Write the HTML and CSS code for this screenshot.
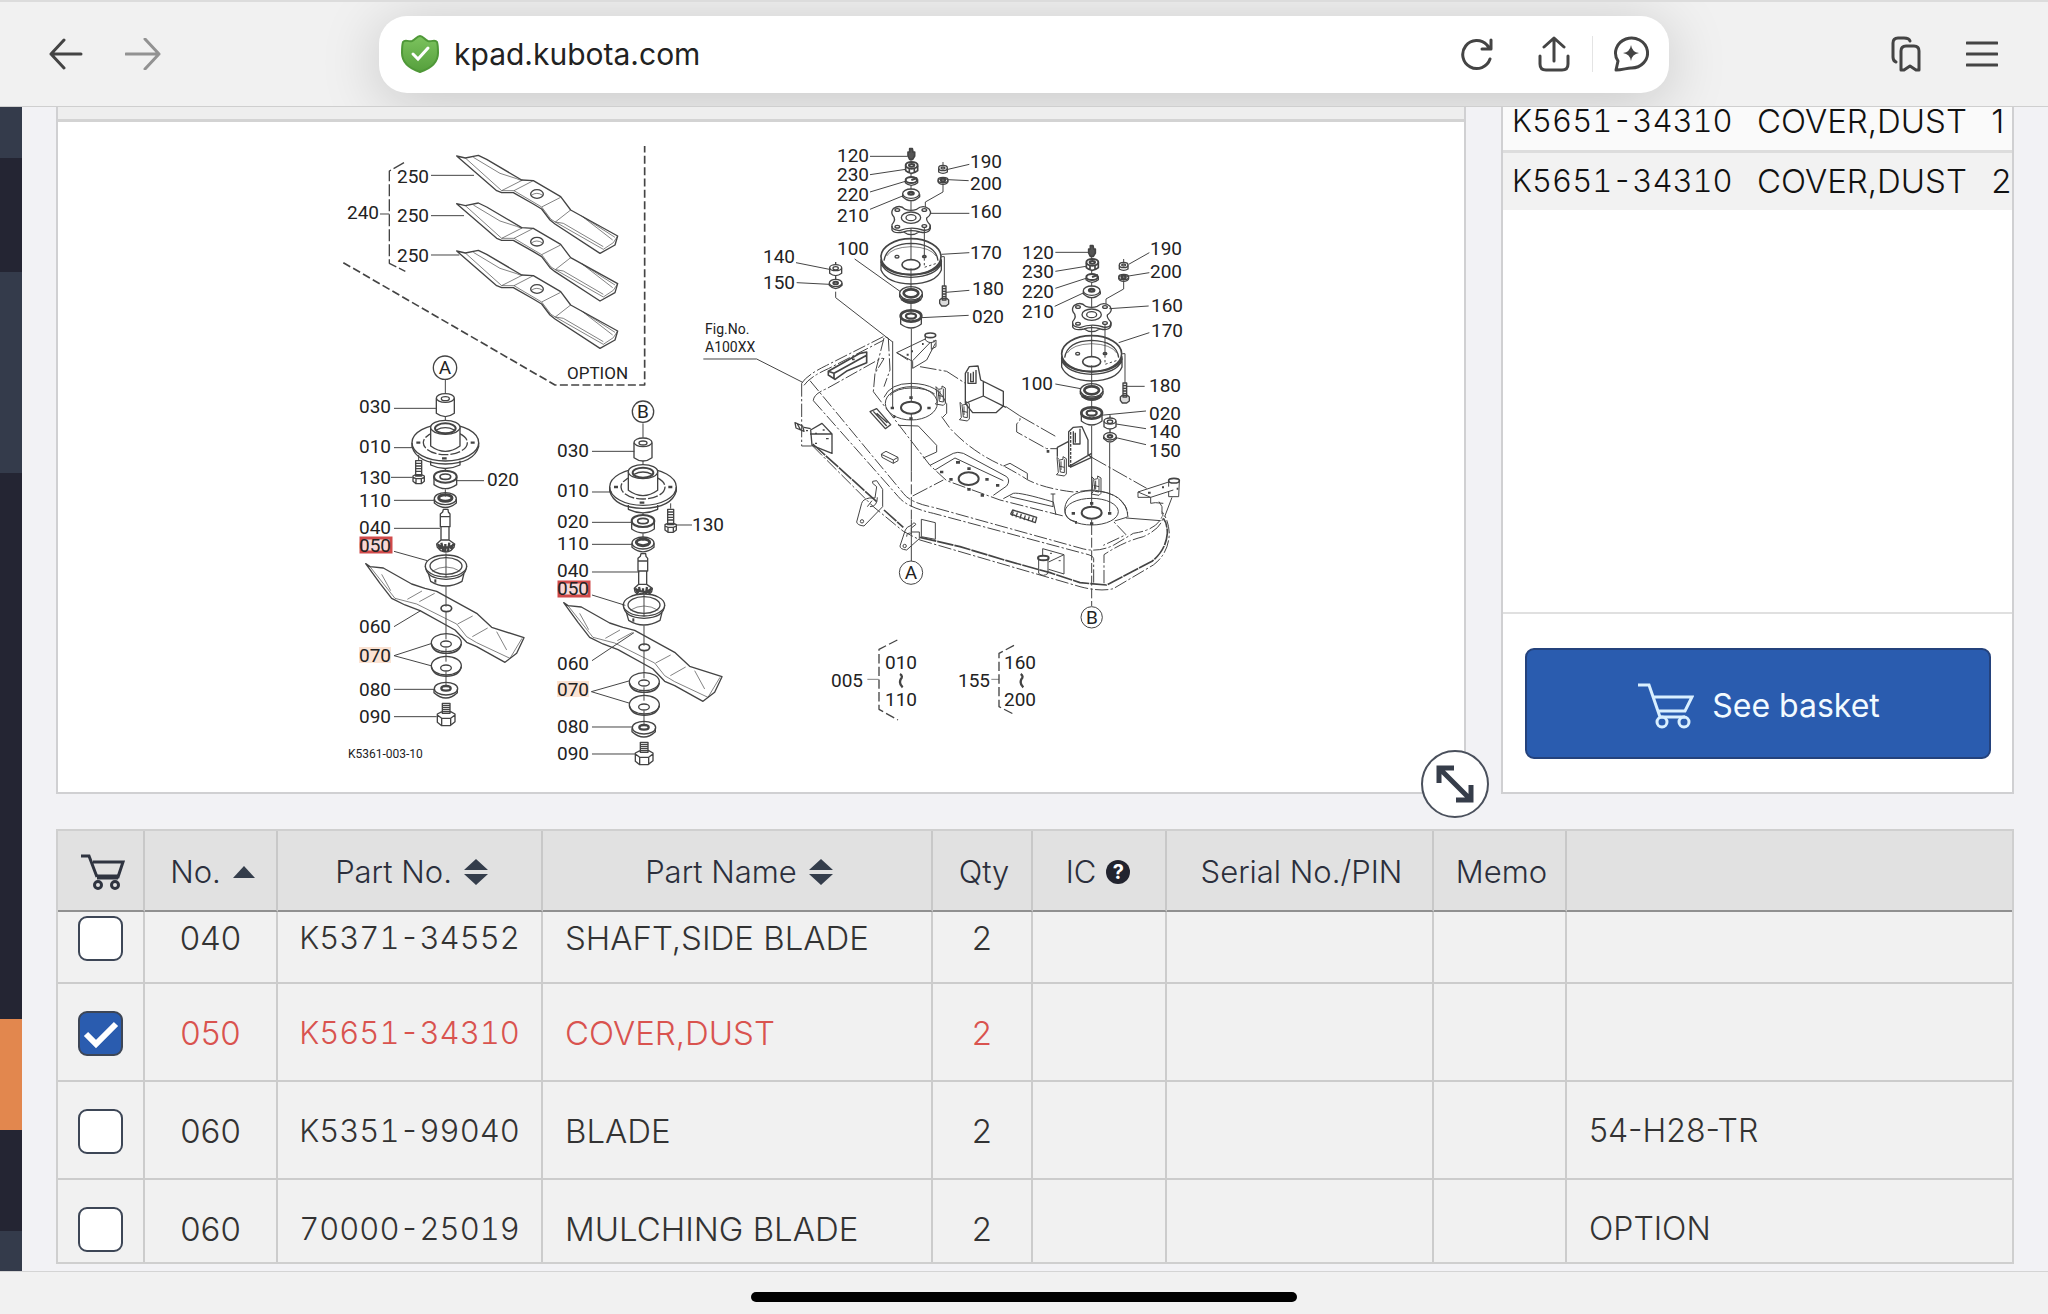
FILE: index.html
```html
<!DOCTYPE html>
<html lang="en">
<head>
<meta charset="utf-8">
<title>kpad.kubota.com</title>
<link rel="stylesheet" href="styles.css">
</head>
<body>
<header class="browser-bar">
  <div class="bar-nav">
    <button class="icon-button" aria-label="Back"><svg width="34" height="32" viewBox="0 0 34 32"><path d="M32 16H2M15 2 2 16 15 30"/></svg></button>
    <button class="icon-button is-dim" aria-label="Forward"><svg width="36" height="32" viewBox="0 0 36 32"><path d="M1 16H34M20 1 34 16 20 31"/></svg></button>
  </div>
  <div class="address">
    <svg class="shield" width="38" height="38" viewBox="0 0 38 38"><defs><linearGradient id="leaf" x1="0" y1="0" x2="0" y2="1"><stop offset="0" stop-color="#7cc35e"/><stop offset="1" stop-color="#559f3c"/></linearGradient></defs><path d="M19 1C22 1 24 5 27 6C31 7 34 4 36 7C37 10 37 14 37 18C37 28 28 34 19 37C10 34 1 28 1 18C1 14 1 10 2 7C4 4 7 7 11 6C14 5 16 1 19 1Z" fill="url(#leaf)" stroke="#4f9838" stroke-width="2"/><path d="M12 19 17 24 27 13" fill="none" stroke="#fff" stroke-width="3" stroke-linecap="round"/></svg>
    <span class="address-text">kpad.kubota.com</span>
    <button class="icon-button" aria-label="Reload"><svg width="32" height="34" viewBox="0 0 32 34"><path d="M29 22A14 14 0 1 1 26 8L29 12M30 3V12H21"/></svg></button>
    <button class="icon-button share" aria-label="Share"><svg width="32" height="36" viewBox="0 0 32 36"><path d="M16 25V2M6 11 16 2 26 11M2 20V28Q2 34 8 34H24Q30 34 30 28V20"/></svg></button>
    <span class="divider"></span>
    <button class="icon-button" aria-label="Assistant"><svg width="36" height="36" viewBox="0 0 36 36"><path d="M3 34 5 25A16 15 0 1 1 18 32C14 32 9 34 3 34Z"/><path d="M18 9Q19 16 26 17Q19 18 18 25Q17 18 10 17Q17 16 18 9Z" fill="#444"/></svg></button>
  </div>
  <div class="bar-tools">
    <button class="icon-button" aria-label="Tabs and bookmarks"><svg width="30" height="36" viewBox="0 0 30 36"><path d="M5 26Q2 25 2 21V7Q2 2 7 2H13Q18 2 19 5"/><path d="M10 34V15Q10 10 15 10H23Q28 10 28 15V34H25L19 30 13 34Z"/></svg></button>
    <button class="icon-button" aria-label="Menu"><svg width="32" height="28" viewBox="0 0 32 28"><path d="M1 3H31M1 14H31M1 25H31"/></svg></button>
  </div>
</header>

<div class="app">
  <nav class="rail" aria-label="Sections">
    <span class="rail-a"></span><span class="rail-b"></span><span class="rail-c"></span><span class="rail-d"></span><span class="rail-current"></span><span class="rail-e"></span><span class="rail-f"></span>
  </nav>
  <main class="content">
    <div class="upper">
      <section class="drawing-panel" aria-label="Parts diagram">
        <div class="drawing-head"></div>
        <svg class="drawing" viewBox="58 122 1406 670">
          <defs>
            <g id="option-blade">
              <path d="M410 78 436 84 475 76 500 88 605 150 640 152 722 200 752 240 893 318 885 345 840 370 705 282 690 270 665 237 640 222 580 188 545 188 530 182Z"/>
              <path d="M436 84 545 182 608 150M545 182 582 182 640 152M460 82 540 130 590 146 605 152M582 182 665 231 693 268 706 276 850 358 880 338 893 318M665 231 722 202M706 276 752 240M785 258 878 330M785 258 885 322M706 276 730 280 850 350" stroke-width="2"/>
              <ellipse cx="651" cy="192" rx="19" ry="13"/><path d="M634 196Q650 184 668 196" stroke-width="2"/>
            </g>
            <g id="spindle-top">
              <path d="M376 117V160M376 230V250M376 385V395M376 448V470" stroke-width="3"/>
              <path d="M349 175V220Q376 240 403 220V175"/><ellipse cx="376" cy="174" rx="27" ry="13"/><ellipse cx="376" cy="176" rx="12" ry="6"/>
              <path d="M332 362V375Q376 396 420 375V362"/>
              <path d="M276 308V320Q290 370 376 372Q462 370 476 320V308"/>
              <ellipse cx="376" cy="308" rx="100" ry="55"/><ellipse cx="376" cy="308" rx="66" ry="36" stroke-dasharray="30 6"/>
              <path d="M332 262V318Q376 350 420 318V262" fill="#fff"/><ellipse cx="376" cy="262" rx="44" ry="21" fill="#fff"/><ellipse cx="376" cy="265" rx="31" ry="15" stroke-width="6"/><path d="M349 270Q376 256 403 270"/>
              <path d="M289 308h12M452 308h12M366 355h14" stroke-width="7"/>
              <path d="M342 410V434Q376 458 410 434V410"/><ellipse cx="376" cy="410" rx="34" ry="18" stroke-width="6"/><ellipse cx="376" cy="410" rx="16" ry="8" stroke-width="5"/>
              <path d="M343 477V489Q376 516 409 489V477"/><ellipse cx="376" cy="476" rx="33" ry="18"/><ellipse cx="376" cy="474" rx="20" ry="10" stroke-width="9"/>
              <path d="M370 508H384L385 516 390 522V560H387V600H363V560H361V522L368 516ZM361 530H390M361 560H390M363 600 350 612 352 622 362 632Q378 640 392 632L402 622 404 612 387 600" fill="#fff"/>
              <path d="M354 614 362 628M364 608 370 634M376 612V636M388 608 384 634M400 612 393 628M352 613Q378 632 403 613" stroke-width="7"/>
            </g>
            <g id="spindle-bottom">
              <path d="M137 671 150 680 190 684 275 732 315 745 350 754 470 820 515 862 612 893 590 940 555 967 470 920 440 907 405 870 300 812 255 795 215 775 180 730Z"/>
              <path d="M150 680 225 775 290 792 410 852 440 890 470 908 570 955 606 895M185 703 212 752M262 778 306 753M298 785 344 760M413 852 458 828M457 890 503 864M530 875 560 930" stroke-width="2"/>
              <path d="M325 700 332 724Q376 752 426 724L432 700" fill="#fff"/><path d="M316 678Q318 716 378 718Q438 716 440 678"/><ellipse cx="378" cy="678" rx="62" ry="33" fill="#fff"/><ellipse cx="378" cy="678" rx="48" ry="25"/><path d="M346 718v10" stroke-width="6"/><path d="M336 694Q378 668 421 694" stroke-width="2"/>
              <path d="M378 640V712M378 740V800M378 815V898M378 925V965M378 995V1035" stroke-width="3"/>
              <ellipse cx="379" cy="805" rx="16" ry="10" stroke-width="5"/>
              <path d="M334 912Q340 940 379 940Q418 940 424 912M334 980Q340 1009 379 1009Q418 1009 424 980"/>
              <ellipse cx="379" cy="908" rx="45" ry="27"/><ellipse cx="378" cy="912" rx="16" ry="9"/>
              <ellipse cx="379" cy="977" rx="45" ry="28"/><ellipse cx="378" cy="984" rx="16" ry="9"/>
              <path d="M342 1048V1058Q378 1090 412 1058V1048"/><ellipse cx="378" cy="1046" rx="35" ry="19"/><ellipse cx="378" cy="1045" rx="14" ry="7" stroke-width="7"/>
              <path d="M367 1090H390V1120H367ZM352 1122 366 1115H392L405 1122V1145L390 1157H365L352 1147ZM352 1125 365 1135H392L405 1125M365 1135V1157M392 1135V1157" fill="#fff"/><path d="M368 1096H390M368 1102H390M368 1108H390M368 1114H390"/>
            </g>
            <g id="bolt">
              <path d="M-9-38H9V8H-9ZM-17 8 -9 4H9L17 8V24L8 31H-8L-17 24ZM-17 12 -8 16H8L17 12M-8 16V31M8 16V31" fill="#fff"/><path d="M-8-30H8M-8-22H8M-8-14H8M-8-6H8"/>
            </g>
            <g id="pulley-stack">
              <path d="M513 90V96M513 128V140M513 166V178M513 212V255M513 275V390M513 415V478M513 520V548" stroke-width="3"/>
              <path d="M509 56H517L519 66H524V78L518 88H509L504 78V66H509Z" fill="#555" stroke-width="5"/>
              <path d="M497 108V122Q514 138 533 122V108M508 116V130M523 116V130" stroke-width="5"/><ellipse cx="515" cy="106" rx="18" ry="10" stroke-width="6"/><ellipse cx="515" cy="106" rx="8" ry="4" stroke-width="6"/>
              <path d="M496 152V158Q514 174 533 158V148"/><ellipse cx="514" cy="150" rx="17" ry="9" stroke-width="6"/><path d="M514 150 532 144" stroke-width="6"/>
              <path d="M488 193V200Q513 224 539 200V193"/><ellipse cx="513" cy="191" rx="25" ry="14"/><ellipse cx="513" cy="190" rx="8" ry="4" stroke-width="7"/>
              <path d="M460 236Q480 222 495 238Q513 244 530 238Q550 222 568 238Q578 252 560 264Q558 272 570 284Q574 304 548 300Q513 288 478 302Q452 300 456 284Q470 268 458 256Q452 246 460 236Z" fill="#fff"/>
              <path d="M456 288V300Q462 312 490 306Q513 298 540 306Q566 312 571 296V286M491 306Q513 322 537 306"/>
              <ellipse cx="513" cy="263" rx="29" ry="17"/><ellipse cx="513" cy="263" rx="15" ry="9"/><ellipse cx="472" cy="240" rx="7" ry="4"/><ellipse cx="553" cy="240" rx="7" ry="4"/><ellipse cx="472" cy="290" rx="7" ry="4"/><ellipse cx="553" cy="288" rx="7" ry="4"/>
              <ellipse cx="513" cy="380" rx="90" ry="54" stroke-width="5"/><path d="M432 392Q440 342 513 340Q588 342 594 392M423 388V420Q440 460 513 462Q588 460 604 420V388M423 400Q440 440 513 442Q588 440 604 400"/><path d="M423 394Q440 432 513 434Q588 432 604 394" stroke-width="6"/>
              <path d="M440 378Q455 352 513 350Q572 352 588 378" stroke-width="2"/><ellipse cx="513" cy="404" rx="27" ry="15" stroke-width="5"/><ellipse cx="471" cy="380" rx="6" ry="4"/><ellipse cx="553" cy="380" rx="5" ry="3" stroke-width="5"/>
              <path d="M553 294V375M609 160V186L556 216V232M609 96V108M605 380H613V468" stroke-width="3"/><path d="M553 385V412L590 400" stroke-dasharray="7 7" stroke-width="3"/>
              <path d="M479 492V500Q490 520 513 520Q538 520 547 500V492"/><ellipse cx="513" cy="490" rx="34" ry="20"/><ellipse cx="513" cy="490" rx="22" ry="12" stroke-width="8"/><path d="M484 506Q513 526 542 506" stroke-width="9"/>
              <path d="M482 560V582Q513 606 544 582V560"/><ellipse cx="513" cy="558" rx="31" ry="17" stroke-width="8"/><ellipse cx="513" cy="558" rx="15" ry="8" stroke-width="7"/>
              <path d="M596 115V126Q609 134 622 126V115"/><ellipse cx="609" cy="114" rx="13" ry="8"/><ellipse cx="609" cy="114" rx="6" ry="3"/>
              <ellipse cx="609" cy="150" rx="15" ry="8"/><ellipse cx="609" cy="154" rx="15" ry="9"/><ellipse cx="609" cy="150" rx="6" ry="4" stroke-width="7"/>
              <path d="M607 468H618V510H607ZM599 510 605 505H620L626 510V522L618 528H605L599 520Z" fill="#ddd"/><path d="M607 476H618M607 484H618M607 492H618M607 500H618"/>
            </g>
            <g id="nut-pair">
              <path d="M287 396V404M287 436V450M269 414V430Q287 444 305 430V414"/><ellipse cx="287" cy="413" rx="18" ry="9"/><ellipse cx="287" cy="415" rx="8" ry="5"/>
              <path d="M268 460V466Q287 486 306 466V460"/><ellipse cx="287" cy="459" rx="19" ry="11"/><ellipse cx="287" cy="459" rx="7" ry="4" stroke-width="6"/>
            </g>
            <g id="clip">
              <path d="M-14-26-10 20-16 26 8 30 14 24V-22L4-28V-20L-6-18ZM-8-18-4 18 8 20V-20M-8 0 8 4M-2-14V12"/>
            </g>
          </defs>

          <g class="ink">
            <g class="bold" transform="translate(320 130) scale(.33333)">
              <use href="#option-blade"/><use href="#option-blade" y="143"/><use href="#option-blade" y="285"/>
              <path d="M180 252H208M333 136H462M333 257H432M333 375H418" stroke-width="3"/>
              <path d="M252 98 208 123V400L256 424" stroke-dasharray="36 9"/>
              <path d="M70 398 705 765H974V48" stroke-width="5" stroke-dasharray="24 10"/>
            </g>

            <g class="bold" transform="translate(320 340) scale(.33333)">
              <use href="#spindle-top"/><use href="#spindle-bottom"/><use href="#bolt" x="296" y="400"/>
              <circle cx="375" cy="83" r="35"/>
              <path d="M222 205H348M222 323H280M213 412H278M410 422H492M222 481H342M222 565H360M222 634 322 662M222 860 302 812M222 947 336 910M222 947 336 978M222 1048H342M222 1130H350M296 345V362" stroke-width="3"/>
            </g>
            <g class="bold" transform="translate(530 390) scale(.33333)">
              <use href="#spindle-top" x="-37" y="-17"/><use href="#spindle-bottom" x="-36" y="-33"/><use href="#bolt" x="422" y="396"/>
              <circle cx="339" cy="65" r="32"/>
              <path d="M186 184H313M186 306H245M186 397H308M186 463H308M186 546H328M186 615 286 646M186 812 312 728M184 905 300 872M184 905 300 940M186 1011H308M186 1092H316M440 405H486M422 340V356" stroke-width="3"/>
            </g>

            <g class="bold" transform="translate(740 130) scale(.33333)">
              <use href="#pulley-stack"/><use href="#nut-pair"/>
              <path d="M390 79H503M390 134 497 118M390 186 496 154M390 238 490 197M624 118 688 103M624 149 686 152M570 250H688M604 373 688 368M618 487 688 481M545 563 686 556M344 387 480 484M168 398 268 418M170 458 268 463M287 485V503L458 636M-110 687H50L188 757" stroke-width="3"/>
            </g>
            <g class="bold" transform="translate(980 220) scale(.33333)">
              <use href="#pulley-stack" x="-178" y="21"/><use href="#nut-pair" x="103" y="190"/>
              <path d="M226 97H325M226 154 318 139M226 205 318 175M224 259 312 218M446 133 508 98M446 168 508 158M388 266 506 258M416 368 508 338M440 499H494M226 492 302 506M362 586 498 573M408 612 498 626M408 653 498 674" stroke-width="3"/>
            </g>

            <g transform="translate(760 320) scale(.33333)">
              <path d="M454 26V245M454 280V455M995 318V560M995 600V610M1049 368V575M398 64V262"/>
              <path d="M454 455V600M995 615V858" stroke-dasharray="30 8"/><path d="M454 600V724"/>
              <g stroke-dasharray="40 7 7 7">
                <path d="M125 190Q140 165 200 136L370 50L385 54M132 196Q150 170 205 146L372 60M125 190V378H155M160 242Q160 222 200 206L350 122Q366 112 372 116L345 160L340 215"/>
                <path d="M372 54 345 160M385 54 390 150 372 200"/>
                <path d="M150 182 430 520Q450 548 520 562L960 684Q1010 700 1060 676L1120 640Q1190 630 1206 590V560L1197 545"/>
                <path d="M160 242 415 530Q440 562 520 580L970 700Q1000 706 1001 716V790M1032 790V704Q1090 665 1150 650Q1215 620 1208 580"/>
                <path d="M158 378 340 560 430 634 480 660 960 800Q1020 816 1060 806L1180 735Q1226 700 1228 640Q1226 600 1206 575"/>
                <path d="M340 215 510 436L560 482L720 540L910 588M545 290 570 325Q640 400 735 440Q790 470 800 478Q850 505 940 516L995 510Q1060 515 1085 545Q1110 570 1100 592L1060 604L1098 644L1030 676"/>
              </g>
              <path d="M158 372 185 396 350 545M372 570 430 622M480 652 600 680 740 722 870 758 960 788 1040 795 1176 724Q1218 690 1222 640Q1222 610 1210 595" stroke-width="5" stroke-dasharray="50 3"/>
              <path d="M458 528 550 480M560 250V280L548 292M480 140 560 154 616 190M738 260 780 288V300L770 312V336L860 386H892M780 288 892 352M995 412 1160 505" stroke-dasharray="50 7 8 7"/>
              <path d="M205 154 300 100 320 96V128L262 152 225 178 205 165ZM205 154 222 160 320 106M222 160V178M276 118h8" stroke-width="5"/>
              <path d="M410 98 498 56M410 98 444 120M410 98 458 124V145L500 120 526 70M458 122 512 66M496 48V60Q512 76 528 60V80L514 88V66"/><ellipse cx="511" cy="46" rx="16" ry="7" stroke-width="5"/><path d="M440 104h6M454 94h5M486 72h5M520 64h4" stroke-width="6"/>
              <ellipse cx="454" cy="250" rx="78" ry="50"/><path d="M372 232Q390 190 454 190Q540 192 558 250M390 226Q410 204 454 204Q500 204 524 222"/><ellipse cx="453" cy="263" rx="30" ry="18" stroke-width="6"/>
              <ellipse cx="995" cy="575" rx="80" ry="40"/><path d="M914 566Q920 514 995 512Q1100 516 1104 592M914 566Q914 600 945 604"/><ellipse cx="995" cy="578" rx="30" ry="18" stroke-width="6"/>
              <ellipse cx="626" cy="476" rx="30" ry="19" stroke-width="6"/>
              <path d="M448 233h10M392 264h10M502 264h10M448 296h10M400 290h6M990 550h10M935 580h10M1044 580h10M990 611h10M945 607h6M588 427h12M622 446h10M540 456h10M568 478h10M676 478h10M708 496h10M622 508h10M662 526h10M860 394h8" stroke-width="8"/>
              <path d="M510 436 580 400Q592 394 610 400L740 470Q752 482 740 498L700 526M525 450 585 414 730 482M415 316 475 318 530 376V396L490 414M730 438 750 430 802 460V478M730 536 760 520Q780 516 880 546L888 585M750 530 880 560"/>
              <path d="M330 275 350 266 392 314 376 326ZM340 274 380 318M350 280 382 308" stroke-width="4"/><path d="M364 402 378 394 414 412V422L400 430 366 412ZM400 430V420L366 404M400 420 414 412"/>
              <path d="M752 582 758 570 830 592 826 608ZM760 574 756 588M772 578 768 592M784 582 780 596M796 586 792 600M808 589 804 603M820 592 816 606" stroke-width="4"/>
              <path d="M105 308 128 318 132 334 108 324ZM112 312 122 330M132 322 152 326M152 330 186 310 216 342V400L156 376ZM216 342H150M165 340h6M188 330h6M198 356h8M165 370h6M138 332h6M216 342V402" stroke-width="4"/>
              <path d="M338 484 350 482 368 508V560L312 618Q292 616 290 606L305 550Q308 538 328 534H345L350 500 338 490ZM330 560Q352 560 352 532M322 560 336 542"/><circle cx="306" cy="604" r="5"/>
              <path d="M484 598 526 608V658L484 650ZM454 616Q462 604 467 612V614L454 624V636H478V656L440 690Q420 688 420 678L436 630Q440 620 454 616ZM456 640Q440 636 440 650"/><circle cx="434" cy="678" r="5"/>
              <path d="M848 686 912 704V762L866 748M848 686V706M866 726 912 704M836 716V760Q850 772 864 760V716M870 700h6M896 722h6"/><ellipse cx="850" cy="714" rx="16" ry="7" stroke-width="6"/>
              <path d="M616 250V160L628 140 654 138 662 180 730 214V258L708 278H638L616 250 670 228 738 262M670 228V182M624 156V190H648V150M632 160V185H640V155" stroke-width="4"/>
              <use href="#clip" x="614" y="273"/><use href="#clip" x="542" y="226"/><use href="#clip" x="905" y="438"/><use href="#clip" x="1009" y="496"/>
              <path d="M926 440V335L940 322 966 320 984 360V404L995 412 930 442M892 410V382L926 364M940 334V372H960V326M946 338V368M926 440 995 400" stroke-width="4"/><path d="M932 336V436" stroke-width="4" stroke-dasharray="8 4"/>
              <path d="M1134 516 1226 486M1134 516V532H1172V550L1186 548 1210 550M1134 516 1172 532 1240 510M1226 484V500M1226 514V530H1256L1258 484M1236 532 1214 590"/><ellipse cx="1242" cy="482" rx="16" ry="7" stroke-width="5"/><path d="M1164 518h8M1206 502h6M1250 506h5" stroke-width="6"/>
              <path d="M872 522H886M879 522V560M1098 594 1202 602"/>
              <circle cx="453" cy="758" r="35" fill="#fff"/><circle cx="995" cy="892" r="32" fill="#fff"/>
            </g>

            <g transform="translate(800 600) scale(.33333)">
              <path d="M292 120 237 148V328L294 360M642 136 597 160V320L640 342" stroke-dasharray="28 10" stroke-width="4"/>
              <path d="M202 238H236M574 238H597" stroke-width="2"/>
              <path d="M300 222Q310 228 302 238Q296 252 308 262M662 222Q672 228 664 238Q658 252 670 262" stroke-width="7"/>
            </g>
          </g>

          <g class="marks">
            <rect class="related" x="359" y="647" width="32" height="16"/><rect class="related" x="557" y="681" width="32" height="16"/>
            <rect class="picked" x="361" y="538" width="30" height="14"/><rect class="picked" x="559" y="582" width="30" height="14"/>
          </g>

          <g class="callouts">
            <text x="397" y="183">250</text><text x="397" y="222">250</text><text x="397" y="262">250</text><text x="347" y="219">240</text>
            <text x="359" y="413">030</text><text x="359" y="453">010</text><text x="359" y="484">130</text><text x="487" y="486">020</text><text x="359" y="507">110</text><text x="359" y="534">040</text><text x="359" y="552">050</text><text x="359" y="633">060</text><text x="359" y="662">070</text><text x="359" y="696">080</text><text x="359" y="723">090</text>
            <text x="557" y="457">030</text><text x="557" y="497">010</text><text x="557" y="528">020</text><text x="557" y="550">110</text><text x="557" y="577">040</text><text x="557" y="595">050</text><text x="557" y="670">060</text><text x="557" y="696">070</text><text x="557" y="733">080</text><text x="557" y="760">090</text><text x="692" y="531">130</text>
            <text x="837" y="162">120</text><text x="837" y="181">230</text><text x="837" y="201">220</text><text x="837" y="222">210</text><text x="837" y="255">100</text><text x="763" y="263">140</text><text x="763" y="289">150</text><text x="970" y="168">190</text><text x="970" y="190">200</text><text x="970" y="218">160</text><text x="970" y="259">170</text><text x="972" y="295">180</text><text x="972" y="323">020</text>
            <text x="1022" y="259">120</text><text x="1022" y="278">230</text><text x="1022" y="298">220</text><text x="1022" y="318">210</text><text x="1021" y="390">100</text><text x="1150" y="255">190</text><text x="1150" y="278">200</text><text x="1151" y="312">160</text><text x="1151" y="337">170</text><text x="1149" y="392">180</text><text x="1149" y="420">020</text><text x="1149" y="438">140</text><text x="1149" y="457">150</text>
            <text x="831" y="687">005</text><text x="885" y="669">010</text><text x="885" y="706">110</text><text x="958" y="687">155</text><text x="1004" y="669">160</text><text x="1004" y="706">200</text>
            <text class="label" x="567" y="379">OPTION</text>
            <text class="small" x="705" y="334">Fig.No.</text><text class="small" x="705" y="352">A100XX</text>
            <text class="code" x="348" y="758">K5361-003-10</text>
            <g text-anchor="middle"><text x="445" y="374">A</text><text x="643" y="418">B</text><text x="911" y="579">A</text><text x="1092" y="624">B</text></g>
          </g>
        </svg>
        <button class="expand" aria-label="Expand diagram"><svg width="38" height="38" viewBox="0 0 38 38"><path d="M3 18V3H18M5 5 33 33M35 20V35H20" fill="none" stroke="#363d4a" stroke-width="5"/></svg></button>
      </section>

      <aside class="basket-panel" aria-label="Basket">
        <table class="basket-list">
          <tbody>
            <tr><td class="part-code">K5651-34310</td><td>COVER,DUST</td><td>1</td></tr>
            <tr><td class="part-code">K5651-34310</td><td>COVER,DUST</td><td>2</td></tr>
          </tbody>
        </table>
        <div class="basket-action">
          <button class="basket-button"><svg width="58" height="46" viewBox="0 0 58 46"><path d="M2 2H13L24 34H49M18 14H56L49 28H22"/><circle cx="26" cy="39" r="5"/><circle cx="48" cy="39" r="5"/></svg>See basket</button>
        </div>
      </aside>
    </div>

    <div class="parts">
      <table class="parts-table">
        <colgroup><col class="c-pick"><col class="c-no"><col class="c-part"><col class="c-name"><col class="c-qty"><col class="c-ic"><col class="c-serial"><col class="c-memo"><col></colgroup>
        <thead>
          <tr>
            <th scope="col" aria-label="Basket"><svg class="cart" width="44" height="36" viewBox="0 0 44 36"><path d="M0 2H8L16 23M12 8H42L37 23H16" /><path d="M16 23H37" stroke-width="5"/><circle cx="17" cy="31" r="3.500"/><circle cx="34" cy="31" r="3.500"/></svg></th>
            <th scope="col"><span class="head">No. <svg width="22" height="12" viewBox="0 0 22 12"><path class="solid" d="M11 0 22 12H0Z"/></svg></span></th>
            <th scope="col"><span class="head">Part No. <svg width="24" height="26" viewBox="0 0 24 26"><path class="solid" d="M12 0 24 11H0ZM0 15H24L12 26Z"/></svg></span></th>
            <th scope="col"><span class="head">Part Name <svg width="24" height="26" viewBox="0 0 24 26"><path class="solid" d="M12 0 24 11H0ZM0 15H24L12 26Z"/></svg></span></th>
            <th scope="col">Qty</th>
            <th scope="col"><span class="head head-tight">IC <span class="help">?</span></span></th>
            <th scope="col">Serial No./PIN</th>
            <th scope="col">Memo</th>
            <th></th>
          </tr>
        </thead>
        <tbody>
          <tr class="row-first"><td class="mid"><input type="checkbox" aria-label="Select 040"></td><td class="mid">040</td><td class="mid part-code">K5371-34552</td><td>SHAFT,SIDE BLADE</td><td class="mid">2</td><td></td><td></td><td></td><td></td></tr>
          <tr class="is-picked"><td class="mid"><input type="checkbox" aria-label="Select 050" checked></td><td class="mid">050</td><td class="mid part-code">K5651-34310</td><td>COVER,DUST</td><td class="mid">2</td><td></td><td></td><td></td><td></td></tr>
          <tr><td class="mid"><input type="checkbox" aria-label="Select 060"></td><td class="mid">060</td><td class="mid part-code">K5351-99040</td><td>BLADE</td><td class="mid">2</td><td></td><td></td><td></td><td>54-H28-TR</td></tr>
          <tr class="row-last"><td class="mid"><input type="checkbox" aria-label="Select 060 mulching"></td><td class="mid">060</td><td class="mid part-code">70000-25019</td><td>MULCHING BLADE</td><td class="mid">2</td><td></td><td></td><td></td><td>OPTION</td></tr>
        </tbody>
      </table>
    </div>
  </main>
</div>
<footer class="home"><span class="home-indicator"></span></footer>
</body>
</html>
```
FILE: styles.css
```css
* { box-sizing: border-box; }
body {
  margin: 0;
  min-height: 100vh;
  display: flex;
  flex-direction: column;
  background: #f1f1f1;
  color: #333;
  font-family: Inter, "Liberation Sans", sans-serif;
  font-size: 33px;
  font-weight: 300;
}
button { font: inherit; cursor: pointer; }

/* Browser toolbar */
.browser-bar {
  height: 107px;
  display: grid;
  grid-template-columns: 379px 1fr 379px;
  align-items: center;
  border-top: 2px solid #dcdcdc;
  border-bottom: 1px solid #cfcfcf;
  overflow: hidden;
}
.icon-button { display: flex; padding: 0; border: 0; background: none; }
.icon-button path { fill: none; stroke: #444; stroke-width: 3; stroke-linecap: round; stroke-linejoin: round; }
.icon-button.is-dim path { stroke: #929292; }
.icon-button path[fill] { fill: #444; stroke: none; }
.bar-nav { display: flex; gap: 42px; padding-left: 49px; }
.bar-tools { display: flex; align-items: center; justify-content: flex-end; gap: 45px; padding-right: 50px; }
.address {
  height: 77px;
  display: flex;
  align-items: center;
  padding: 0 20px 0 22px;
  border-radius: 28px;
  background: #fff;
  box-shadow: 0 8px 60px rgba(0, 0, 0, .18);
  color: #222;
  font-size: 30px;
  font-weight: 400;
}
.address-text { flex: 1; padding-left: 15px; }
.share { margin-left: 45px; }
.divider { width: 1px; height: 36px; margin: 0 20px 0 22px; background: #e4e4e4; }

/* Page shell */
.app { flex: 1; display: flex; background: #f2f2f5; }
.rail { width: 22px; display: flex; flex-direction: column; background: #242533; }
.rail-a { height: 51px; background: #343b4b; }
.rail-b { height: 114px; }
.rail-c { height: 201px; background: #343b4b; }
.rail-d { flex: 1; }
.rail-current { height: 111px; background: #e2874e; }
.rail-e { height: 101px; }
.rail-f { height: 40px; background: #343b4b; }
.content { flex: 1; min-width: 0; display: flex; flex-direction: column; gap: 35px; padding: 0 34px 7px; }
.upper { flex: 1; display: grid; grid-template-columns: minmax(0, 1410fr) minmax(0, 513fr); gap: 35px; }

/* Diagram */
.drawing-panel { position: relative; display: flex; flex-direction: column; border: 2px solid #d0d0d2; border-top: 0; background: #fff; }
.drawing-head { height: 15px; background: #eee; border-bottom: 3px solid #d3d3d3; }
.drawing { display: block; width: 100%; }
.ink { fill: none; stroke: #444; stroke-width: 3; stroke-linejoin: round; }
.ink .bold { stroke-width: 4; }
.callouts { fill: #222; font-family: Roboto, sans-serif; font-size: 19px; font-weight: 400; }
.callouts .label { font-size: 17px; }
.callouts .small { font-size: 14px; }
.callouts .code { font-size: 12px; }
.related { fill: #fbe3d3; }
.picked { fill: #f6d8d8; stroke: #d04a4a; stroke-width: 3; }
.expand {
  position: absolute;
  right: -25px;
  bottom: -26px;
  width: 68px;
  height: 68px;
  display: flex;
  align-items: center;
  justify-content: center;
  padding: 0;
  border: 2px solid #4a505c;
  border-radius: 50%;
  background: #fff;
}

/* Basket */
.basket-panel { display: flex; flex-direction: column; border: 2px solid #d0d0d2; border-top: 0; background: #fff; color: #111; }
.basket-list { width: 100%; border-collapse: separate; border-spacing: 0; background: #f2f2f2; }
.basket-list td { height: 57px; padding: 0 0 2px 9px; white-space: nowrap; }
.basket-list td + td { padding-left: 22px; }
.basket-list tr:first-child td { height: 46px; padding-bottom: 15px; border-bottom: 3px solid #ddd; background: #fafafa; line-height: 28px; }
.basket-action { margin-top: auto; padding: 34px 21px 33px 22px; border-top: 2px solid #e0e0e0; }
.basket-button {
  width: 100%;
  height: 111px;
  display: flex;
  align-items: center;
  justify-content: center;
  gap: 18px;
  padding: 4px 0 0;
  border: 2px solid #24427c;
  border-radius: 9px;
  background: #2a5caf;
  color: #f2faff;
  font-size: 32px;
  font-weight: 400;
}
.basket-button svg { fill: none; stroke: #d9efff; stroke-width: 3; }
.part-code { font-size: 31px; font-variant-numeric: tabular-nums; }

/* Parts table */
.parts { overflow: hidden; border: 2px solid #cfcfcf; }
.parts-table { width: 100%; table-layout: fixed; border-collapse: separate; border-spacing: 0; background: #f1f1f1; }
.c-pick { width: 87px; }
.c-no { width: 133px; }
.c-part { width: 265px; }
.c-name { width: 390px; }
.c-qty { width: 100px; }
.c-ic { width: 134px; }
.c-serial { width: 267px; }
.c-memo { width: 133px; }
.parts-table th { height: 81px; padding: 2px 0 0 4px; background: #e1e1e1; border-right: 2px solid #c8c8c8; border-bottom: 2px solid #909090; color: #2b2f3c; font-size: 31px; font-weight: 300; }
.parts-table td { height: 98px; padding: 2px 22px 0; border-right: 2px solid #ccc; border-bottom: 2px solid #ccc; white-space: nowrap; line-height: 40px; }
.parts-table th:last-child, .parts-table td:last-child { border-right: 0; }
.parts-table .mid { padding: 2px 0 0; text-align: center; }
.parts-table .row-first td { height: 72px; padding-bottom: 20px; }
.parts-table .row-last td { height: 82px; padding-top: 16px; border-bottom: 0; }
.parts-table td:last-child { font-size: 32px; }
.is-picked { color: #d9534f; }
.head { display: flex; align-items: center; justify-content: center; gap: 12px; }
.head-tight { gap: 10px; padding-right: 6px; }
.solid { fill: #343d4b; }
.cart { display: block; margin: 0 auto; fill: none; stroke: #2f3440; stroke-width: 3; }
.help { width: 24px; height: 24px; border-radius: 50%; background: #22242f; color: #fff; font-size: 20px; font-weight: 700; line-height: 24px; }
.parts-table input {
  appearance: none;
  display: block;
  width: 45px;
  height: 45px;
  margin: 0 auto;
  border: 2px solid #3d4656;
  border-radius: 9px;
  background: #fff;
}
.parts-table input:checked {
  background: #2a5caf url("data:image/svg+xml,%3Csvg xmlns='http://www.w3.org/2000/svg' viewBox='0 0 41 41'%3E%3Cpath d='M6 21 16 31 36 11' fill='none' stroke='white' stroke-width='6'/%3E%3C/svg%3E") center / 100%;
}

/* Home bar */
.home { height: 44px; display: flex; align-items: center; justify-content: center; border-top: 1px solid #d4d4d4; }
.home-indicator { width: 546px; height: 10px; margin-top: 6px; border-radius: 5px; background: #000; }
```
